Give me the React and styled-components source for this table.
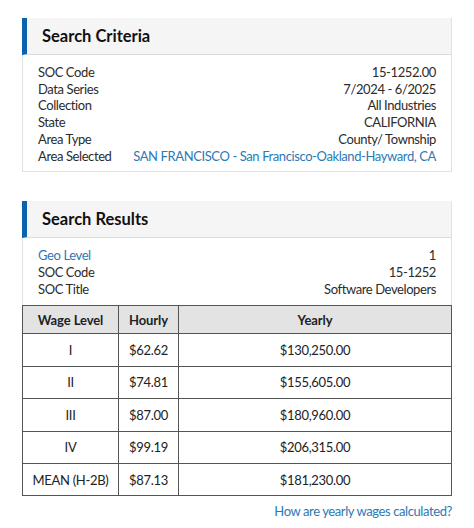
import styled, { createGlobalStyle } from 'styled-components'

const GlobalStyle = createGlobalStyle`
  html, body {
    margin: 0;
    padding: 0;
    background: #fff;
  }
  body {
    font-family: Lato, "Liberation Sans", sans-serif;
    color: #222;
  }
`

const Page = styled.div`
  width: 430px;
  padding: 18px 22px 0;
  display: flex;
  flex-direction: column;
  gap: 29px;
`

const Card = styled.section`
  border: 1px solid #e2e2e2;
  background: #fff;
`

const CardHeader = styled.div`
  height: 36px;
  display: flex;
  align-items: center;
  padding-left: 15px;
  background: #f5f5f5;
  border-left: 5px solid #0b63ad;
  border-bottom: 1px solid #dcdcdc;
  margin: -1px 0 0 -1px;
`

const Title = styled.h2`
  margin: 0;
  font-size: 16.5px;
  font-weight: 700;
  color: #111;
`

const Details = styled.div`
  padding: ${p => p.$pad || '9px 15px 7px'};
`

const Row = styled.div`
  display: flex;
  justify-content: space-between;
  font-size: 13px;
  line-height: 16.7px;
  letter-spacing: -0.4px;
  color: #2b2b2b;
`

const Link = styled.a`
  color: #2b79b6;
  text-decoration: none;
`

const Table = styled.table`
  width: calc(100% + 2px);
  margin: 0 -1px -1px;
  border-collapse: collapse;
  table-layout: fixed;
  font-size: 13px;
  letter-spacing: -0.3px;
  color: #222;
`

const Th = styled.th`
  height: 27px;
  background: #e3e3e3;
  border: 1px solid #555;
  font-weight: 700;
  letter-spacing: -0.1px;
  text-align: center;
  padding: 0;
`

const Td = styled.td`
  height: 31.4px;
  border: 1px solid #555;
  text-align: center;
  padding: 0;
`

const Footer = styled.div`
  margin-top: -22px;
  text-align: right;
  font-size: 13px;
  letter-spacing: -0.4px;
`

const criteria = [
  ['SOC Code', '15-1252.00'],
  ['Data Series', '7/2024 - 6/2025'],
  ['Collection', 'All Industries'],
  ['State', 'CALIFORNIA'],
  ['Area Type', 'County/ Township'],
]

const wages = [
  ['I', '$62.62', '$130,250.00'],
  ['II', '$74.81', '$155,605.00'],
  ['III', '$87.00', '$180,960.00'],
  ['IV', '$99.19', '$206,315.00'],
  ['MEAN (H-2B)', '$87.13', '$181,230.00'],
]

export default function App() {
  return (
    <>
      <GlobalStyle />
      <Page>
        <Card>
          <CardHeader>
            <Title>Search Criteria</Title>
          </CardHeader>
          <Details>
            {criteria.map(([k, v]) => (
              <Row key={k}>
                <span>{k}</span>
                <span>{v}</span>
              </Row>
            ))}
            <Row>
              <span>Area Selected</span>
              <Link href="#">SAN FRANCISCO - San Francisco-Oakland-Hayward, CA</Link>
            </Row>
          </Details>
        </Card>

        <Card>
          <CardHeader>
            <Title>Search Results</Title>
          </CardHeader>
          <Details $pad="9px 15px 8px">
            <Row>
              <Link href="#">Geo Level</Link>
              <span>1</span>
            </Row>
            <Row>
              <span>SOC Code</span>
              <span>15-1252</span>
            </Row>
            <Row>
              <span>SOC Title</span>
              <span>Software Developers</span>
            </Row>
          </Details>
          <Table>
            <colgroup>
              <col style={{ width: 96 }} />
              <col style={{ width: 60 }} />
              <col />
            </colgroup>
            <thead>
              <tr>
                <Th>Wage Level</Th>
                <Th>Hourly</Th>
                <Th>Yearly</Th>
              </tr>
            </thead>
            <tbody>
              {wages.map(([lvl, hr, yr]) => (
                <tr key={lvl}>
                  <Td>{lvl}</Td>
                  <Td>{hr}</Td>
                  <Td>{yr}</Td>
                </tr>
              ))}
            </tbody>
          </Table>
        </Card>

        <Footer>
          <Link href="#">How are yearly wages calculated?</Link>
        </Footer>
      </Page>
    </>
  )
}
